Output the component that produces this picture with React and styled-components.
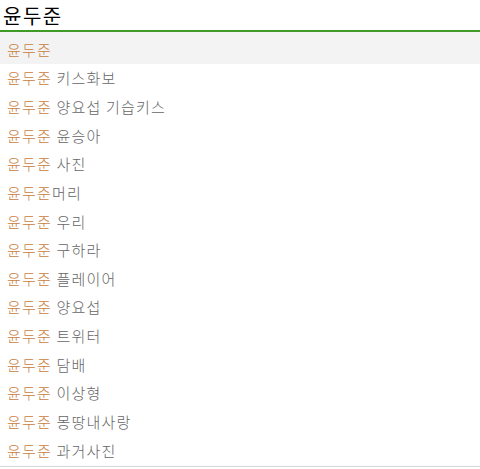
import React from 'react';
import styled, { createGlobalStyle } from 'styled-components';

const GlobalStyle = createGlobalStyle`
  html, body {
    margin: 0;
    padding: 0;
    background: #fff;
    font-family: "Noto Sans CJK KR", "Noto Sans", sans-serif;
  }
`;

const Wrapper = styled.div`
  width: 480px;
  display: flex;
  flex-direction: column;
`;

const SearchBox = styled.div`
  height: 30px;
  padding-left: 3px;
  display: flex;
  align-items: center;
  font-size: 20px;
  letter-spacing: 1.5px;
  color: #000;
  border-bottom: 2px solid #3f9a26;
`;

const List = styled.ul`
  list-style: none;
  margin: 0;
  padding: 0 0 2px;
  border-bottom: 1px solid #d8d8d8;
`;

const Item = styled.li`
  height: 28.64px;
  padding: ${props => (props.active ? '3px' : '0')} 0 0 7px;
  display: flex;
  align-items: center;
  font-size: 15px;
  font-weight: 300;
  letter-spacing: 1.2px;
  color: #666;
  background: ${props => (props.active ? '#f3f3f3' : 'transparent')};
  white-space: pre;
`;

const Match = styled.span`
  color: #c8803f;
`;

const query = '윤두준';

const suggestions = [
  '',
  ' 키스화보',
  ' 양요섭 기습키스',
  ' 윤승아',
  ' 사진',
  '머리',
  ' 우리',
  ' 구하라',
  ' 플레이어',
  ' 양요섭',
  ' 트위터',
  ' 담배',
  ' 이상형',
  ' 몽땅내사랑',
  ' 과거사진',
];

export default function App() {
  return (
    <Wrapper>
      <GlobalStyle />
      <SearchBox>{query}</SearchBox>
      <List>
        {suggestions.map((rest, i) => (
          <Item key={i} active={i === 0}>
            <Match>{query}</Match>
            {rest}
          </Item>
        ))}
      </List>
    </Wrapper>
  );
}
